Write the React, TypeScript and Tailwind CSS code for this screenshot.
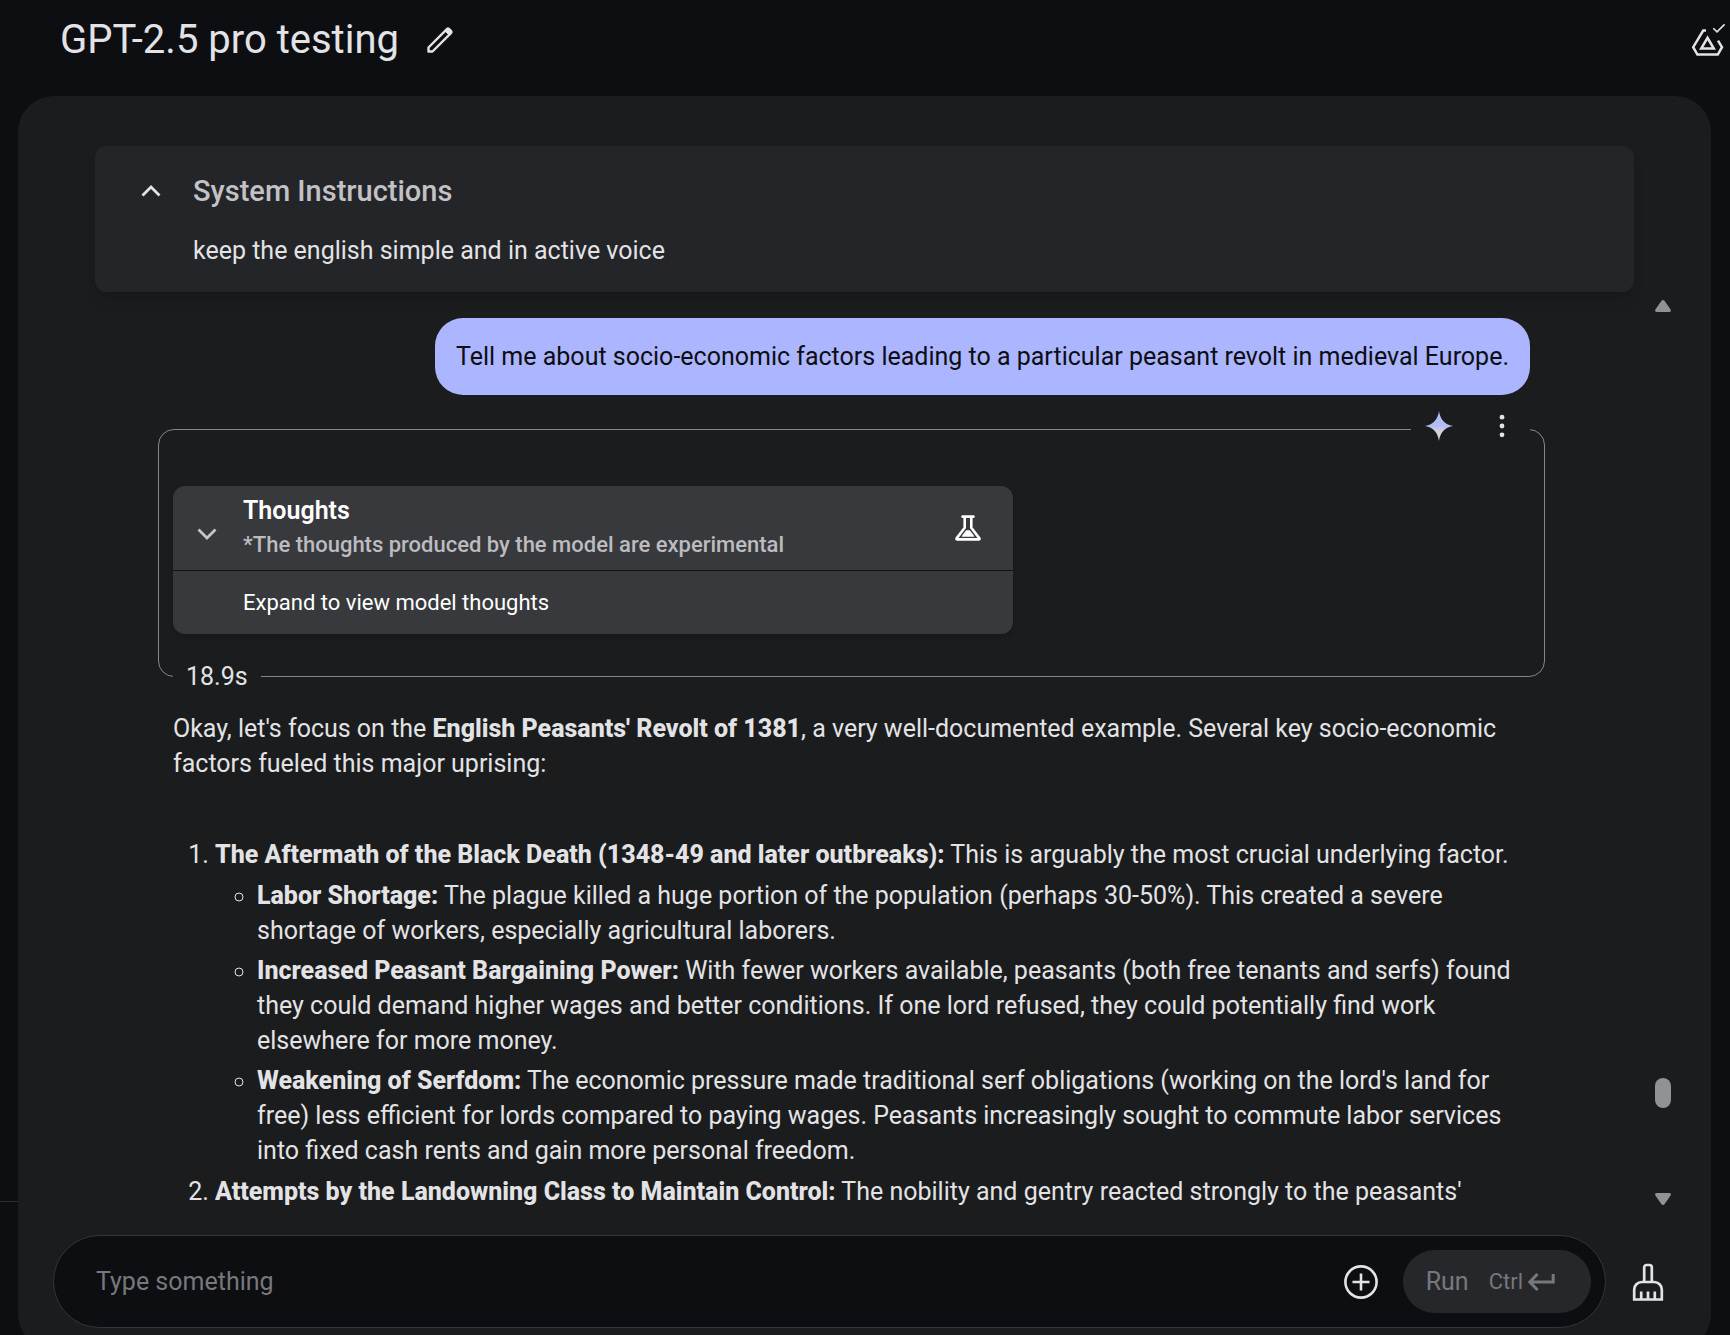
import React from 'react';

interface Factor {
  title: string;
  text: string;
  points?: Factor[];
}

const factors: Factor[] = [
  {
    title: 'The Aftermath of the Black Death (1348-49 and later outbreaks):',
    text: 'This is arguably the most crucial underlying factor.',
    points: [
      {
        title: 'Labor Shortage:',
        text: 'The plague killed a huge portion of the population (perhaps 30-50%). This created a severe shortage of workers, especially agricultural laborers.',
      },
      {
        title: 'Increased Peasant Bargaining Power:',
        text: 'With fewer workers available, peasants (both free tenants and serfs) found they could demand higher wages and better conditions. If one lord refused, they could potentially find work elsewhere for more money.',
      },
      {
        title: 'Weakening of Serfdom:',
        text: "The economic pressure made traditional serf obligations (working on the lord's land for free) less efficient for lords compared to paying wages. Peasants increasingly sought to commute labor services into fixed cash rents and gain more personal freedom.",
      },
    ],
  },
  {
    title: 'Attempts by the Landowning Class to Maintain Control:',
    text: "The nobility and gentry reacted strongly to the peasants'",
  },
];

const PencilIcon = () => (
  <svg className="w-[26px] h-[26px]" viewBox="0 0 26 26" fill="none" stroke="currentColor" strokeWidth="2.4" strokeLinejoin="round">
    <path d="M1.5 24.5v-4L19.9 2.1a1.6 1.6 0 0 1 2.2 0l1.8 1.8a1.6 1.6 0 0 1 0 2.2L5.500 24.5z" />
    <path d="M18 4l2.400-2.400h1.600l2.400 2.400v1.600L22 8z" fill="currentColor" strokeWidth="1" />
  </svg>
);

const DriveSavedIcon = () => (
  <svg className="w-9 h-9" viewBox="0 0 36 36" fill="none" stroke="currentColor" strokeWidth="2.5">
    <path d="M16 8.6h-2.8L3.2 25.2l4.2 7.3h20.4l4.2-7.3-4-6.6" />
    <path d="M17.5 15.8l-6.3 10.8h12.6z" />
    <path d="M23.3 6.2l3.7 3.6L34.6 2.4" strokeWidth="1.6" />
  </svg>
);

const Chevron = ({ className }: { className: string }) => (
  <svg className={className} viewBox="0 0 20 12" fill="none" stroke="currentColor" strokeWidth="2.8">
    <path d="M1.5 1.5L10 10l8.5-8.5" />
  </svg>
);

const SparkIcon = () => (
  <svg className="w-7 h-[30px]" viewBox="0 0 28 30">
    <defs>
      <linearGradient id="spark" x1="0" y1="0" x2="0" y2="1">
        <stop offset="0" stopColor="#a9c0f8" />
        <stop offset="0.5" stopColor="#b4bdf0" />
        <stop offset="0.68" stopColor="#d3cfdb" />
        <stop offset="1" stopColor="#dedbd2" />
      </linearGradient>
    </defs>
    <path d="M14 0c1.2 8.2 5.4 13.4 14 15-8.6 1.6-12.8 6.8-14 15C12.8 21.8 8.6 16.6 0 15 8.6 13.4 12.8 8.2 14 0z" fill="url(#spark)" />
  </svg>
);

const MoreIcon = () => (
  <svg className="w-6 h-6" viewBox="0 0 24 24" fill="currentColor">
    <circle cx="12" cy="3.2" r="2.4" />
    <circle cx="12" cy="12" r="2.4" />
    <circle cx="12" cy="20.8" r="2.4" />
  </svg>
);

const FlaskIcon = () => (
  <svg className="w-[26px] h-[26px]" viewBox="0 0 26 26" fill="none" stroke="currentColor" strokeWidth="2.6" strokeLinecap="round" strokeLinejoin="round">
    <path d="M7.5 1.6h11M9.7 1.6v11.2L1.6 23.4q-.4 1 .6 1h21.600q1 0 .6-1l-8.100-10.600V1.600" />
    <path d="M11.200 15.300h3.600l4.400 5.800q.3.600-.3.600H7.100q-.6 0-.3-.6z" fill="currentColor" stroke="none" />
  </svg>
);

const AddIcon = () => (
  <svg className="w-[34px] h-[34px]" viewBox="0 0 34 34" fill="none" stroke="currentColor" strokeWidth="2.6">
    <circle cx="17" cy="17" r="15.600" />
    <path d="M17 8.5v17M8.5 17h17" />
  </svg>
);

const ReturnIcon = () => (
  <svg className="w-[27px] h-[18px]" viewBox="0 0 27 18" fill="none" stroke="currentColor" strokeWidth="3">
    <path d="M9.5 1L1.8 9l7.7 8M2.5 9h22.7V1" />
  </svg>
);

const BrushIcon = () => (
  <svg className="w-8 h-[38px]" viewBox="0 0 32 38" fill="none" stroke="currentColor" strokeWidth="2.700">
    <path d="M12.200 19V4.400a2.400 2.400 0 0 1 2.400-2.400h2.800a2.400 2.400 0 0 1 2.400 2.400V19" />
    <path d="M2.200 36.500V26.500a7.500 7.500 0 0 1 7.500-7.500h12.600a7.500 7.500 0 0 1 7.500 7.500v10z" />
    <path d="M9.200 28.500v8M16 28.500v8M22.800 28.500v8" />
  </svg>
);

const ScrollArrow = ({ className }: { className: string }) => (
  <svg className={className} viewBox="0 0 16 12" fill="currentColor">
    <path d="M6.300 1q1.700-2 3.400 0L15.600 9.600q.8 2.400-1.200 2.400H1.600q-2 0-1.200-2.400z" />
  </svg>
);

const FactorLabel = ({ factor }: { factor: Factor }) => (
  <>
    <strong className="font-extrabold">{factor.title}</strong> {factor.text}
  </>
);

const SystemInstructions = () => (
  <section className="relative mx-[77px] flex rounded-xl bg-[#242528] pt-[27px] pb-6 pl-[46px] pr-8 shadow-lg">
    <button aria-label="Collapse system instructions" className="flex h-9 w-[52px] items-center">
      <Chevron className="h-3 w-5 rotate-180" />
    </button>
    <div>
      <h2 className="text-[29px] leading-9 font-medium text-[#c2c2c6]">System Instructions</h2>
      <p className="mt-6 text-[25px] leading-[35px]">keep the english simple and in active voice</p>
    </div>
  </section>
);

const ThoughtsCard = () => (
  <div className="max-w-[840px] rounded-xl bg-[#38393c] shadow-md">
    <div className="flex items-center border-b border-[#131416] py-2 pr-8 pl-6">
      <button aria-label="Expand thoughts" className="mt-3 w-[46px] text-[#c6c6ca]">
        <Chevron className="h-3 w-5" />
      </button>
      <div className="flex-1">
        <h3 className="text-[25px] leading-[34px] font-semibold text-white">Thoughts</h3>
        <p className="text-[22px] leading-[34px] font-medium text-[#bcbcc0]">*The thoughts produced by the model are experimental</p>
      </div>
      <span className="text-white">
        <FlaskIcon />
      </span>
    </div>
    <p className="py-[14px] pl-[70px] text-[22px] leading-[35px] text-white">Expand to view model thoughts</p>
  </div>
);

const ModelTurn = () => (
  <div className="relative mt-[34px] -mr-[15px] -ml-[15px] rounded-2xl border border-[#85868a] px-[14px] pt-14 pb-[42px]">
    <div className="absolute -top-5 right-[14px] flex h-8 w-[119px] items-center justify-between bg-[#1b1c1d] pr-4 pl-[14px]">
      <SparkIcon />
      <button aria-label="More options">
        <MoreIcon />
      </button>
    </div>
    <ThoughtsCard />
    <span className="absolute -bottom-[18px] left-[14px] bg-[#1b1c1d] px-[13px] text-[25px] leading-[35px]">18.9s</span>
  </div>
);

const Scrollbar = () => (
  <div className="flex w-4 flex-col py-2 text-[#919296]">
    <ScrollArrow className="h-3 w-4" />
    <div className="grow-9" />
    <div className="h-[30px] rounded-full bg-[#919296]" />
    <div className="grow" />
    <ScrollArrow className="h-3 w-4 rotate-180" />
  </div>
);

const PromptBar = () => (
  <form className="mt-[22px] flex items-center pr-[47px] pl-[35px]" onSubmit={(e) => e.preventDefault()}>
    <div className="flex flex-1 items-center rounded-full border border-[#33353a] bg-[#0c0e12] py-[14px] pr-[14px] pl-[42px]">
      <input
        type="text"
        aria-label="Prompt"
        placeholder="Type something"
        className="min-w-0 flex-1 bg-transparent text-[25px] leading-[35px] outline-none placeholder:text-[#77787c]"
      />
      <button type="button" aria-label="Add attachment" className="mr-[25px]">
        <AddIcon />
      </button>
      <button type="submit" className="flex h-[63px] items-center rounded-full bg-[#26272b] pr-9 pl-[23px] text-[#77787c]">
        <span className="text-[25px]">Run</span>
        <span className="mr-[5px] ml-5 text-[22px]">Ctrl</span>
        <ReturnIcon />
      </button>
    </div>
    <button type="button" aria-label="Clear chat" className="ml-[26px]">
      <BrushIcon />
    </button>
  </form>
);

const App: React.FC = () => {
  return (
    <div className="flex h-screen flex-col overflow-hidden bg-[#0c0e12] font-['Roboto',sans-serif] text-[#e3e3e6]">
      <header className="flex h-24 shrink-0 items-center pr-1 pb-4 pl-[60px]">
        <h1 className="text-[40px] leading-[48px]">GPT-2.5 pro testing</h1>
        <button aria-label="Edit title" className="ml-7">
          <PencilIcon />
        </button>
        <span className="ml-auto">
          <DriveSavedIcon />
        </span>
      </header>

      <div className="flex min-h-0 flex-1">
        <aside className="flex w-[18px] flex-col justify-end">
          <div className="h-[134px] border-t border-[#2c2d31]" />
        </aside>

        <main className="mr-[19px] -mb-[15px] flex min-w-0 flex-1 flex-col rounded-[36px] bg-[#1b1c1d] pt-[50px] pb-[22px]">
          <SystemInstructions />

          <div className="flex min-h-0 flex-1 pr-10">
            <div className="flex-1 overflow-hidden pt-[26px] pr-[125px] pl-[155px]">
              <p className="ml-auto w-fit rounded-[28px] bg-[#acb5ff] px-[21px] py-[21px] text-[25px] leading-[35px] text-[#0c0e12]">
                Tell me about socio-economic factors leading to a particular peasant revolt in medieval Europe.
              </p>

              <ModelTurn />

              <div className="mt-[34px] text-[25px] leading-[35px]">
                <p>
                  Okay, let's focus on the <strong className="font-extrabold">English Peasants' Revolt of 1381</strong>, a very
                  well-documented example. Several key socio-economic factors fueled this major uprising:
                </p>
                <ol className="mt-14 list-decimal space-y-1.5 pl-[42px]">
                  {factors.map((factor) => (
                    <li key={factor.title}>
                      <FactorLabel factor={factor} />
                      {factor.points && (
                        <ul className="mt-1.5 list-[circle] space-y-[5px] pl-[42px]">
                          {factor.points.map((point) => (
                            <li key={point.title}>
                              <FactorLabel factor={point} />
                            </li>
                          ))}
                        </ul>
                      )}
                    </li>
                  ))}
                </ol>
              </div>
            </div>
            <Scrollbar />
          </div>

          <PromptBar />
        </main>
      </div>
    </div>
  );
};

export default App;
